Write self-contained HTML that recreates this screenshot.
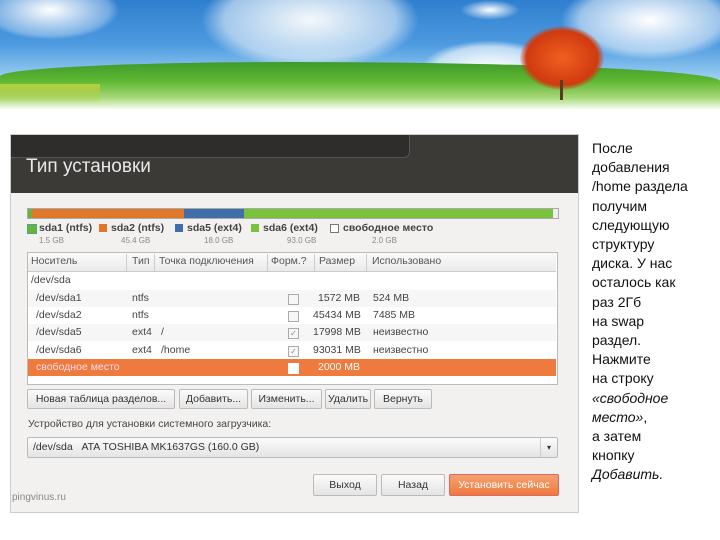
<!DOCTYPE html>
<html><head><meta charset="utf-8"><style>
body{margin:0;width:720px;height:540px;position:relative;overflow:hidden;background:#fff;font-family:"Liberation Sans","DejaVu Sans",sans-serif}
.a{position:absolute;white-space:nowrap}
.s{font-size:10.5px;color:#333}
.btn{position:absolute;height:18px;border:1px solid #bbb;border-radius:2px;background:linear-gradient(#fbfbfb,#e4e4e4);font-size:10.5px;color:#333;line-height:18px;text-align:center}
.row{position:absolute;left:28px;width:528px;height:17px;font-size:10.5px;color:#444;line-height:17px}
.row span{position:absolute}
.cb{position:absolute;left:260px;top:4px;width:9px;height:9px;border:1px solid #aaa;background:#f6f6f6;font-size:8px;line-height:9px;text-align:center;color:#888}
</style></head><body>
<!-- sky -->
<div class="a" style="left:0;top:0;width:720px;height:110px;background:linear-gradient(180deg,#2f7fcf 0%,#4d9ae0 40%,#8cc4ee 65%,#fff 100%)"></div>
<div class="a" style="left:-20px;top:-20px;width:140px;height:60px;border-radius:50%;background:radial-gradient(#fff,rgba(255,255,255,.3) 60%,transparent 70%)"></div>
<div class="a" style="left:200px;top:-30px;width:220px;height:100px;border-radius:50%;background:radial-gradient(#f4f8fb,rgba(230,240,248,.6) 55%,transparent 70%)"></div>
<div class="a" style="left:420px;top:40px;width:140px;height:60px;border-radius:50%;background:radial-gradient(#fff,rgba(255,255,255,.6) 55%,transparent 70%)"></div>
<div class="a" style="left:560px;top:-20px;width:180px;height:80px;border-radius:50%;background:radial-gradient(#fff,rgba(255,255,255,.5) 55%,transparent 70%)"></div>
<div class="a" style="left:460px;top:0;width:60px;height:20px;border-radius:50%;background:radial-gradient(#fff,transparent 70%)"></div>
<div class="a" style="left:0;top:62px;width:720px;height:48px;background:linear-gradient(180deg,#3f9a2a 0%,#5fb832 40%,#a8d97a 75%,#fff 100%);border-radius:40% 60% 0 0/30% 40% 0 0"></div>
<div class="a" style="left:0;top:84px;width:100px;height:20px;background:linear-gradient(#b8d040,rgba(255,255,255,0));"></div>
<div class="a" style="left:520px;top:26px;width:84px;height:64px;border-radius:50%;background:radial-gradient(#f06020,#d03a10 60%,transparent 72%)"></div>
<div class="a" style="left:560px;top:80px;width:3px;height:20px;background:#5a3a20"></div>
<!-- screenshot frame -->
<div class="a" style="left:10px;top:134px;width:567px;height:377px;border:1px solid #ccc;background:#f2f1f0"></div>
<div class="a" style="left:11px;top:135px;width:567px;height:58px;background:#3b3a37"></div>
<div class="a" style="left:11px;top:135px;width:398px;height:22px;background:#2e2d2b;border-bottom:1px solid #555;border-right:1px solid #555;border-radius:0 0 6px 0"></div>
<div class="a" style="left:26px;top:156px;font-size:19px;color:#e8e8e8">Тип установки</div>
<!-- bar -->
<div class="a" style="left:27px;top:208px;width:530px;height:9px;border:1px solid #aaa;background:#eee;overflow:hidden">
<div class="a" style="left:0;top:0;width:4px;height:9px;background:#6cb33e"></div>
<div class="a" style="left:4px;top:0;width:152px;height:9px;background:#e0782c"></div>
<div class="a" style="left:156px;top:0;width:60px;height:9px;background:#3f6ea8"></div>
<div class="a" style="left:216px;top:0;width:309px;height:9px;background:#79c23e"></div>
</div>
<div class="a" style="left:27px;top:224px;width:8px;height:8px;background:#6cb33e;border:1px solid #4a8"></div>
<div class="a s" style="left:39px;top:222px;font-weight:bold;color:#444">sda1 (ntfs)</div>
<div class="a" style="left:99px;top:224px;width:8px;height:8px;background:#e0782c"></div>
<div class="a s" style="left:111px;top:222px;font-weight:bold;color:#444">sda2 (ntfs)</div>
<div class="a" style="left:175px;top:224px;width:8px;height:8px;background:#3f6ea8"></div>
<div class="a s" style="left:187px;top:222px;font-weight:bold;color:#444">sda5 (ext4)</div>
<div class="a" style="left:251px;top:224px;width:8px;height:8px;background:#79c23e"></div>
<div class="a s" style="left:263px;top:222px;font-weight:bold;color:#444">sda6 (ext4)</div>
<div class="a" style="left:330px;top:224px;width:7px;height:7px;border:1px solid #777;background:#fff"></div>
<div class="a s" style="left:343px;top:222px;font-weight:bold;color:#444">свободное место</div>
<div class="a" style="left:39px;top:236px;font-size:8px;color:#888">1.5 GB</div>
<div class="a" style="left:121px;top:236px;font-size:8px;color:#888">45.4 GB</div>
<div class="a" style="left:204px;top:236px;font-size:8px;color:#888">18.0 GB</div>
<div class="a" style="left:287px;top:236px;font-size:8px;color:#888">93.0 GB</div>
<div class="a" style="left:372px;top:236px;font-size:8px;color:#888">2.0 GB</div>
<!-- table -->
<div class="a" style="left:27px;top:252px;width:529px;height:131px;border:1px solid #bbb;background:#fff"></div>
<div class="row" style="top:253px;height:18px;background:linear-gradient(#fafafa,#eaeaea);border-bottom:1px solid #ccc;color:#555">
<span style="left:3px">Носитель</span><span style="left:104px">Тип</span><span style="left:131px">Точка подключения</span><span style="left:243px">Форм.?</span><span style="left:291px">Размер</span><span style="left:344px">Использовано</span></div>
<div class="a" style="left:126px;top:254px;width:1px;height:17px;background:#ccc"></div>
<div class="a" style="left:154px;top:254px;width:1px;height:17px;background:#ccc"></div>
<div class="a" style="left:267px;top:254px;width:1px;height:17px;background:#ccc"></div>
<div class="a" style="left:314px;top:254px;width:1px;height:17px;background:#ccc"></div>
<div class="a" style="left:366px;top:254px;width:1px;height:17px;background:#ccc"></div>
<div class="row" style="top:272px"><span style="left:3px">/dev/sda</span></div>
<div class="row" style="top:290px;background:#f6f6f6"><span style="left:8px">/dev/sda1</span><span style="left:104px">ntfs</span><div class="cb"></div><span style="left:290px">1572 MB</span><span style="left:345px">524 MB</span></div>
<div class="row" style="top:307px"><span style="left:8px">/dev/sda2</span><span style="left:104px">ntfs</span><div class="cb"></div><span style="left:285px">45434 MB</span><span style="left:345px">7485 MB</span></div>
<div class="row" style="top:324px;background:#f6f6f6"><span style="left:8px">/dev/sda5</span><span style="left:104px">ext4</span><span style="left:133px">/</span><div class="cb">✓</div><span style="left:285px">17998 MB</span><span style="left:345px">неизвестно</span></div>
<div class="row" style="top:342px"><span style="left:8px">/dev/sda6</span><span style="left:104px">ext4</span><span style="left:133px">/home</span><div class="cb">✓</div><span style="left:285px">93031 MB</span><span style="left:345px">неизвестно</span></div>
<div class="row" style="top:359px;background:#ee7a3e;color:#fde"><span style="left:8px">свободное место</span><div class="cb" style="background:#fff;border-color:#fff"></div><span style="left:290px;color:#fff">2000 MB</span></div>
<!-- buttons -->
<div class="btn" style="left:27px;top:389px;width:146px">Новая таблица разделов...</div>
<div class="btn" style="left:179px;top:389px;width:67px">Добавить...</div>
<div class="btn" style="left:251px;top:389px;width:69px">Изменить...</div>
<div class="btn" style="left:325px;top:389px;width:44px">Удалить</div>
<div class="btn" style="left:374px;top:389px;width:56px">Вернуть</div>
<div class="a s" style="left:28px;top:418px;color:#444">Устройство для установки системного загрузчика:</div>
<div class="btn" style="left:27px;top:437px;width:529px;height:19px;text-align:left;line-height:19px"><span style="margin-left:5px">/dev/sda &nbsp;&nbsp;ATA TOSHIBA MK1637GS (160.0 GB)</span><span style="position:absolute;right:0;top:0;width:16px;height:19px;border-left:1px solid #ccc;text-align:center;font-size:8px">▾</span></div>
<div class="btn" style="left:313px;top:474px;width:62px;height:20px;line-height:20px">Выход</div>
<div class="btn" style="left:381px;top:474px;width:62px;height:20px;line-height:20px">Назад</div>
<div class="btn" style="left:449px;top:474px;width:108px;height:20px;line-height:20px;background:linear-gradient(#f5a070,#ee7a3e);border-color:#d66;color:#fff">Установить сейчас</div>
<div class="a" style="left:12px;top:492px;font-size:10px;color:#888">pingvinus.ru</div>
<!-- right text -->
<div class="a" style="left:592px;top:139px;font-size:14px;line-height:19.2px;color:#111;white-space:normal;width:128px">После<br>добавления<br>/home раздела<br>получим<br>следующую<br>структуру<br>диска. У нас<br>осталось как<br>раз 2Гб<br>на swap<br>раздел.<br>Нажмите<br>на строку<br><i>«свободное<br>место»</i>,<br>а затем<br>кнопку<br><i>Добавить.</i></div>
</body></html>
